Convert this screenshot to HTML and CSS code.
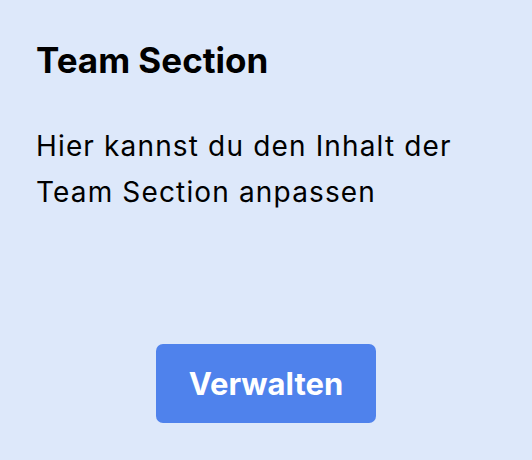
FILE: index.html
```html
<!DOCTYPE html>
<html>
<head>
  <title>Team Section</title>
  <link rel="stylesheet" href="styles.css">
</head>
<body>
  <div class="card">
    <h2 class="card-title">Team Section</h2>
    <p class="card-text">Hier kannst du den Inhalt der Team Section anpassen</p>
    <button class="card-button">Verwalten</button>
  </div>
</body>
</html>
```

FILE: styles.css
```css
html, body {
  margin: 0;
  padding: 0;
}
body {
  font-family: Inter, "Noto Sans", sans-serif;
  background-color: #dde8fa;
  color: #000;
}
.card {
  box-sizing: border-box;
  height: 460px;
  padding: 39px 36px 37px 36px;
  display: flex;
  flex-direction: column;
}
.card-title {
  margin: 0;
  font-size: 35px;
  line-height: 42px;
  font-weight: 700;
}
.card-text {
  margin: 42px 0 0 0;
  font-size: 28px;
  line-height: 46px;
  font-weight: 400;
  letter-spacing: 1.15px;
}
.card-button {
  margin-top: auto;
  align-self: center;
  width: 220px;
  height: 79px;
  border: none;
  border-radius: 7px;
  background-color: #4f82ec;
  color: #fff;
  font-family: inherit;
  font-size: 31px;
  font-weight: 700;
  cursor: pointer;
}
```
